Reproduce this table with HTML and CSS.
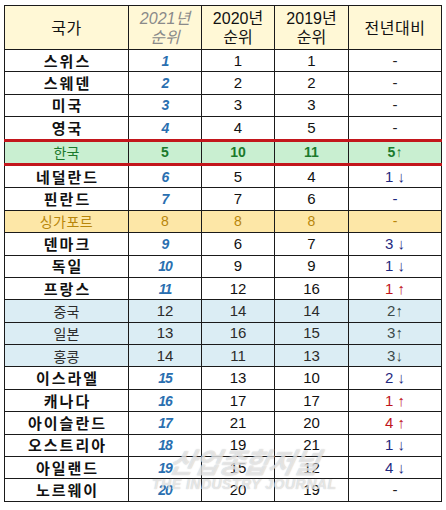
FILE: index.html
```html
<!DOCTYPE html>
<html lang="ko">
<head>
<meta charset="utf-8">
<title>국가 순위</title>
<link rel="stylesheet" href="styles.css">
</head>
<body>
<div class="wrap">
<table class="rank">
  <colgroup>
    <col class="c-name"><col class="c-n"><col class="c-n"><col class="c-n2"><col class="c-diff">
  </colgroup>
  <thead>
    <tr>
      <th class="h-name">국가</th>
      <th class="h-2021">2021년<br>순위</th>
      <th>2020년<br>순위</th>
      <th>2019년<br>순위</th>
      <th class="h-diff">전년대비</th>
    </tr>
  </thead>
  <tbody>
    <tr><td class="name">스위스</td><td class="r21">1</td><td>1</td><td>1</td><td class="dash">-</td></tr>
    <tr><td class="name">스웨덴</td><td class="r21">2</td><td>2</td><td>2</td><td class="dash">-</td></tr>
    <tr><td class="name">미국</td><td class="r21">3</td><td>3</td><td>3</td><td class="dash">-</td></tr>
    <tr class="before-kr"><td class="name">영국</td><td class="r21">4</td><td>4</td><td>5</td><td class="dash">-</td></tr>
    <tr class="kr"><td>한국</td><td>5</td><td>10</td><td>11</td><td>5↑</td></tr>
    <tr><td class="name">네덜란드</td><td class="r21">6</td><td>5</td><td>4</td><td class="down">1 ↓</td></tr>
    <tr><td class="name">핀란드</td><td class="r21">7</td><td>7</td><td>6</td><td class="down">-</td></tr>
    <tr class="sg"><td>싱가포르</td><td>8</td><td>8</td><td>8</td><td>-</td></tr>
    <tr><td class="name">덴마크</td><td class="r21">9</td><td>6</td><td>7</td><td class="down">3 ↓</td></tr>
    <tr><td class="name">독일</td><td class="r21">10</td><td>9</td><td>9</td><td class="down">1 ↓</td></tr>
    <tr><td class="name">프랑스</td><td class="r21">11</td><td>12</td><td>16</td><td class="up">1 ↑</td></tr>
    <tr class="asia"><td>중국</td><td>12</td><td>14</td><td>14</td><td>2↑</td></tr>
    <tr class="asia"><td>일본</td><td>13</td><td>16</td><td>15</td><td>3↑</td></tr>
    <tr class="asia"><td>홍콩</td><td>14</td><td>11</td><td>13</td><td>3↓</td></tr>
    <tr><td class="name">이스라엘</td><td class="r21">15</td><td>13</td><td>10</td><td class="down">2 ↓</td></tr>
    <tr><td class="name">캐나다</td><td class="r21">16</td><td>17</td><td>17</td><td class="up">1 ↑</td></tr>
    <tr><td class="name">아이슬란드</td><td class="r21">17</td><td>21</td><td>20</td><td class="up">4 ↑</td></tr>
    <tr><td class="name">오스트리아</td><td class="r21">18</td><td>19</td><td>21</td><td class="down">1 ↓</td></tr>
    <tr><td class="name">아일랜드</td><td class="r21">19</td><td>15</td><td>12</td><td class="down">4 ↓</td></tr>
    <tr><td class="name">노르웨이</td><td class="r21">20</td><td>20</td><td>19</td><td class="dash">-</td></tr>
  </tbody>
</table>
<div class="watermark">
  <div class="wm-ko">산업종합저널</div>
  <div class="wm-en">THE INDUSTRY JOURNAL</div>
</div>
</div>
</body>
</html>
```

FILE: styles.css
```css
html, body {
  margin: 0;
  padding: 0;
  background: #ffffff;
}

.wrap {
  position: relative;
  padding: 5px 0 0 4px;
}

.rank {
  border-collapse: collapse;
  table-layout: fixed;
  width: 437px;
  font-family: "Liberation Sans", "Noto Sans CJK KR", sans-serif;
  color: #111;
}

.c-name { width: 124px; }
.c-n { width: 73px; }
.c-n2 { width: 74px; }
.c-diff { width: 93px; }

.rank th,
.rank td {
  border: 1px solid #1a1a1a;
  padding: 0;
  text-align: center;
  vertical-align: middle;
}

.rank th {
  background: #fff8d6;
  height: 43px;
  font-weight: normal;
  font-size: 16px;
  line-height: 19px;
  font-family: "Liberation Sans", "Noto Sans CJK KR", sans-serif;
}

.rank th.h-name,
.rank th.h-diff {
  font-family: "Noto Sans CJK KR", sans-serif;
  font-size: 16px;
  letter-spacing: 0.5px;
}

.rank th.h-2021 {
  color: #8a8a8a;
  font-style: italic;
}

.rank td {
  height: 21.4px;
  font-size: 15px;
  line-height: 18px;
}

.rank td.name {
  font-family: "Noto Sans CJK KR", sans-serif;
  font-weight: bold;
  font-size: 15px;
  letter-spacing: 2px;
  padding-left: 2px;
}

.rank td.r21 {
  color: #2a6fb0;
  font-weight: bold;
  font-style: italic;
  font-size: 14px;
  letter-spacing: -1px;
}

.rank td.dash {
  color: #222;
}

.rank td.down {
  color: #1f2a80;
}

.rank td.up {
  color: #c0141b;
}

.rank tr.before-kr td {
  border-bottom: 3px solid #c3161c;
}

.rank tr.kr td {
  background: #c9efd1;
  color: #1b7a2c;
  font-weight: bold;
  font-size: 14px;
  border-bottom: 3px solid #c3161c;
}

.rank tr.kr td:first-child {
  font-family: "Noto Sans CJK KR", sans-serif;
  font-weight: normal;
  font-size: 14px;
}

.rank tr.sg td {
  background: #fde7a7;
  color: #b8860b;
  font-size: 14px;
}

.rank tr.sg td:first-child {
  font-family: "Noto Sans CJK KR", sans-serif;
  letter-spacing: 0.5px;
}

.rank tr.asia td {
  background: #dbedf4;
  color: #2b2b2b;
}

.rank tr.asia td:first-child {
  font-family: "Noto Sans CJK KR", sans-serif;
  font-size: 14px;
}

.rank tr.asia td:last-child {
  color: #3c4a4a;
}

.watermark {
  position: absolute;
  left: 152px;
  top: 446px;
  text-align: center;
  pointer-events: none;
}

.wm-ko {
  font-family: "Noto Sans CJK KR", sans-serif;
  font-weight: bold;
  font-style: italic;
  font-size: 28px;
  line-height: 30px;
  color: rgba(255, 255, 255, 0.6);
  text-shadow: 0 0 1px rgba(140, 140, 140, 0.6);
  transform: skewX(-12deg);
  letter-spacing: -1px;
}

.wm-en {
  font-family: "Liberation Sans", sans-serif;
  font-weight: bold;
  font-style: italic;
  font-size: 14px;
  line-height: 16px;
  color: rgba(255, 255, 255, 0.6);
  text-shadow: 0 0 1px rgba(140, 140, 140, 0.6);
  letter-spacing: 0.5px;
}
```
